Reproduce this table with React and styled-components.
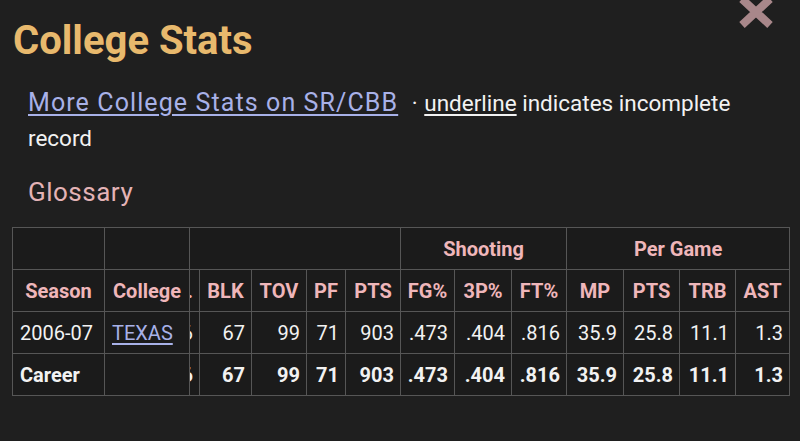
import React from "react";
import styled, { createGlobalStyle } from "styled-components";

const GlobalStyle = createGlobalStyle`
  html, body {
    margin: 0;
    padding: 0;
    background: #1f1f1f;
  }
  body {
    font-family: Roboto, "Liberation Sans", sans-serif;
    color: #f2f2f2;
  }
`;

const Page = styled.div`
  position: relative;
  width: 800px;
  height: 441px;
  overflow: hidden;
  padding-left: 12px;
  box-sizing: border-box;
`;

const CloseButton = styled.button`
  position: absolute;
  top: -3px;
  right: 25px;
  padding: 0;
  border: none;
  background: none;
  line-height: 0;
`;

const Title = styled.h2`
  margin: 19px 0 0 1px;
  font-size: 40px;
  line-height: 44px;
  font-weight: 700;
  color: #e8b96d;
`;

const Note = styled.p`
  margin: 22px 0 0 16px;
  font-size: 22.5px;
  line-height: 35px;
  width: 730px;
`;

const SiteLink = styled.a`
  font-size: 25px;
  letter-spacing: 1.1px;
  color: #a8b1e8;
  text-decoration: underline;
  text-underline-offset: 3px;
`;

const Separator = styled.span`
  margin: 0 1px 0 8px;
`;

const Underlined = styled.span`
  text-decoration: underline;
  text-underline-offset: 3px;
`;

const Glossary = styled.div`
  margin: 19px 0 0 16px;
  font-size: 26px;
  letter-spacing: 0.5px;
  line-height: 35px;
  color: #e4b3b6;
`;

const Table = styled.table`
  margin-top: 17px;
  border-collapse: collapse;
  table-layout: fixed;
  width: 778px;
  font-size: 20px;
  background: #1b1b1b;
`;

const Cell = styled.td`
  border: 1px solid #565656;
  height: 42px;
  padding: 0 ${(p) => (p.$align === "left" ? "7px" : "6px")};
  text-align: ${(p) => p.$align || "right"};
  font-weight: ${(p) => (p.$bold ? 700 : 400)};
  white-space: nowrap;
  overflow: hidden;
  box-sizing: border-box;
`;

const HeadCell = styled.th`
  border: 1px solid #565656;
  height: 42px;
  padding: 0 4px;
  text-align: center;
  font-weight: 700;
  color: #efb6ba;
  white-space: nowrap;
  overflow: hidden;
  box-sizing: border-box;
`;

const Clip = styled.div`
  display: flex;
  justify-content: flex-end;
  overflow: hidden;
`;

const TeamLink = styled.a`
  color: #a8b1e8;
  text-decoration: underline;
  text-underline-offset: 3px;
`;

const widths = [92, 85, 10, 52, 55, 39, 55, 54, 57, 55, 57, 56, 56, 54];
const heads = ["BLK", "TOV", "PF", "PTS", "FG%", "3P%", "FT%", "MP", "PTS", "TRB", "AST"];
const stats = ["67", "99", "71", "903", ".473", ".404", ".816", "35.9", "25.8", "11.1", "1.3"];

const rows = [
  { season: "2006-07", college: "TEXAS", bold: false },
  { season: "Career", college: "", bold: true },
];

export default function App() {
  return (
    <Page>
      <GlobalStyle />
      <CloseButton aria-label="close">
        <svg width="38" height="31" viewBox="0 0 38 31">
          <path d="M5 2 L33 28 M33 2 L5 28" stroke="#a8878a" strokeWidth="8" />
        </svg>
      </CloseButton>
      <Title>College Stats</Title>
      <Note>
        <SiteLink>More College Stats on SR/CBB</SiteLink> <Separator>·</Separator> <Underlined>underline</Underlined> indicates incomplete record
      </Note>
      <Glossary>Glossary</Glossary>
      <Table>
        <colgroup>
          {widths.map((w, i) => (
            <col key={i} style={{ width: w }} />
          ))}
        </colgroup>
        <thead>
          <tr>
            <HeadCell />
            <HeadCell />
            <HeadCell colSpan={5} />
            <HeadCell colSpan={3}>Shooting</HeadCell>
            <HeadCell colSpan={4}>Per Game</HeadCell>
          </tr>
          <tr>
            <HeadCell>Season</HeadCell>
            <HeadCell>College</HeadCell>
            <HeadCell style={{ padding: "0 6px 0 0" }}>
              <Clip>.</Clip>
            </HeadCell>
            {heads.map((h, i) => (
              <HeadCell key={i}>{h}</HeadCell>
            ))}
          </tr>
        </thead>
        <tbody>
          {rows.map((r) => (
            <tr key={r.season}>
              <Cell $align="left" $bold={r.bold}>{r.season}</Cell>
              <Cell $align="left">{r.college && <TeamLink>{r.college}</TeamLink>}</Cell>
              <Cell $bold={r.bold} style={{ padding: "0 6px 0 0" }}>
                <Clip>66</Clip>
              </Cell>
              {stats.map((s, i) => (
                <Cell key={i} $bold={r.bold}>{s}</Cell>
              ))}
            </tr>
          ))}
        </tbody>
      </Table>
    </Page>
  );
}
